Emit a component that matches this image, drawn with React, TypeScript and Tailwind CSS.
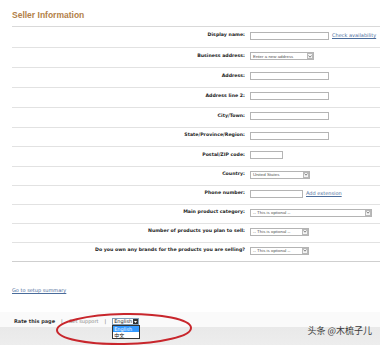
import type { ReactNode } from 'react';

// Seller registration form, shown at a small scale with the language menu open.

function TextBox({ w }: { w: string }) {
  return <div className={`${w} h-[8px] border border-[#b4b4b4] bg-white`} />;
}

function Arrow() {
  return (
    <span className="shrink-0 w-[6px] h-[6px] border border-[#b9b9b9] bg-[#f4f4f4] flex items-center justify-center">
      <svg width="4" height="3" viewBox="0 0 4 3">
        <path d="M0.5 0.5 L2 2.2 L3.5 0.5" fill="none" stroke="#555" strokeWidth="0.7" />
      </svg>
    </span>
  );
}

function Dropdown({ w, text }: { w: string; text: string }) {
  return (
    <div className={`${w} h-[8px] border border-[#b4b4b4] bg-white flex items-center justify-between pl-[2px] pr-[0.5px]`}>
      <span className="font-['Liberation_Sans',Arial,sans-serif] text-[4.4px] leading-[5px] text-[#555] whitespace-nowrap">{text}</span>
      <Arrow />
    </div>
  );
}

function Link({ children }: { children: ReactNode }) {
  return <span className="text-[5px] leading-none text-[#4a6c9b] underline whitespace-nowrap">{children}</span>;
}

type Row = { label: string; h: string; control: ReactNode; extra?: ReactNode };

const rows: Row[] = [
  { label: 'Display name:', h: 'h-[21px]', control: <TextBox w="w-[79px]" />, extra: <Link>Check availability</Link> },
  { label: 'Business address:', h: 'h-[20px]', control: <Dropdown w="w-[64px]" text="Enter a new address" /> },
  { label: 'Address:', h: 'h-[20px]', control: <TextBox w="w-[79px]" /> },
  { label: 'Address line 2:', h: 'h-[20px]', control: <TextBox w="w-[79px]" /> },
  { label: 'City/Town:', h: 'h-[20px]', control: <TextBox w="w-[79px]" /> },
  { label: 'State/Province/Region:', h: 'h-[19px]', control: <TextBox w="w-[79px]" /> },
  { label: 'Postal/ZIP code:', h: 'h-[20px]', control: <TextBox w="w-[33px]" /> },
  { label: 'Country:', h: 'h-[19px]', control: <Dropdown w="w-[60px]" text="United States" /> },
  { label: 'Phone number:', h: 'h-[19px]', control: <TextBox w="w-[53px]" />, extra: <Link>Add extension</Link> },
  { label: 'Main product category:', h: 'h-[19px]', control: <Dropdown w="w-[122px]" text="-- This is optional --" /> },
  { label: 'Number of products you plan to sell:', h: 'h-[19px]', control: <Dropdown w="w-[59px]" text="-- This is optional --" /> },
  { label: 'Do you own any brands for the products you are selling?', h: 'h-[19px]', control: <Dropdown w="w-[59px]" text="-- This is optional --" /> },
];

export default function App() {
  return (
    <div className="relative w-[380px] h-[345px] overflow-hidden bg-white font-['DejaVu_Sans',sans-serif] text-[#333]">
      <div className="pl-[12px]">
        <div className="h-[27px] pt-[11px] border-b border-[#d9d9d9]">
          <h1 className="font-['Liberation_Sans',Arial,sans-serif] text-[8.5px] leading-[9px] font-bold text-[#b27f48]">
            Seller Information
          </h1>
        </div>

        {rows.map((r, i) => (
          <div
            key={r.label}
            className={`${r.h} flex items-center pb-[3px] border-b ${i === rows.length - 1 ? 'border-[#cfcfcf]' : 'border-[#e2e2e2]'}`}
          >
            <div className="w-[233px] text-right text-[4.7px] leading-none font-bold text-[#1e1e1e] whitespace-nowrap">{r.label}</div>
            <div className="ml-[5px] flex items-center gap-[3px]">
              {r.control}
              {r.extra}
            </div>
          </div>
        ))}

        <div className="pt-[13px]">
          <Link>Go to setup summary</Link>
        </div>
      </div>

      {/* footer */}
      <div className="absolute left-0 right-0 top-[312px] h-[15px] bg-[#fafafa]" />
      <div className="absolute left-0 right-0 top-[327px] bottom-0 bg-gradient-to-b from-[#e9e9e9] to-[#ededed]" />
      <div className="absolute left-[14px] top-[318px] flex items-center gap-[4px] text-[5px] leading-none">
        <span className="font-bold text-[#333]">Rate this page</span>
        <span className="text-[#666] px-[2px]">|</span>
        <span className="text-[#888]">Get support</span>
        <span className="text-[#666] px-[2px]">|</span>
        <div className="relative w-[27px] h-[7px] border border-[#7f9db9] bg-white flex items-center justify-between pl-[1px]">
          <span className="text-[5px] leading-none text-[#222]">English</span>
          <span className="w-[5px] h-[5px] bg-[#333] flex items-center justify-center">
            <svg width="3" height="2" viewBox="0 0 3 2">
              <path d="M0 0 L3 0 L1.5 2 Z" fill="#fff" />
            </svg>
          </span>
          {/* open option list */}
          <div className="absolute left-[-1px] top-[6px] w-[28px] border border-[#333] bg-white">
            <div className="h-[6px] bg-[#3399ff] text-white text-[5px] leading-[6px] pl-[1px]">English</div>
            <div className="h-[6px] text-[#111] text-[5px] leading-[6px] pl-[1px] font-['Noto_Sans_CJK_SC',sans-serif]">中文</div>
          </div>
        </div>
      </div>

      {/* hand-drawn highlight */}
      <svg className="absolute left-0 top-0 pointer-events-none" width="380" height="345" viewBox="0 0 380 345">
        <ellipse cx="124" cy="329" rx="67" ry="15" fill="none" stroke="#c8262c" strokeWidth="2" transform="rotate(-1 124 329)" />
      </svg>

      {/* watermark */}
      <div className="absolute right-[8px] top-[326px] text-[9px] leading-none text-[#3a3a3a] font-['Noto_Sans_CJK_SC',sans-serif] whitespace-nowrap">
        头条 @木梳子儿
      </div>
    </div>
  );
}
